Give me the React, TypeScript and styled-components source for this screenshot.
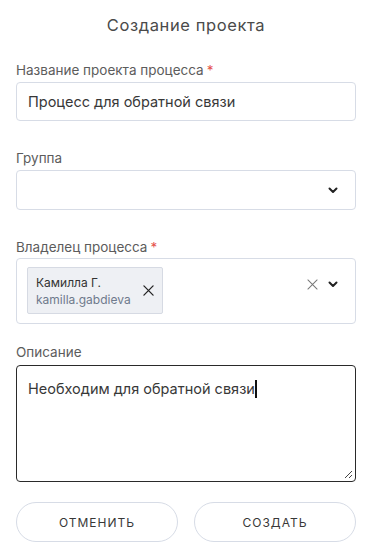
import React from "react";
import styled, { createGlobalStyle } from "styled-components";

const Global = createGlobalStyle`
  html, body { margin: 0; padding: 0; background: #ffffff; }
  body { font-family: Inter, "Noto Sans", Arial, sans-serif; -webkit-font-smoothing: antialiased; }
  * { box-sizing: border-box; }
`;

const Page = styled.div`
  width: 375px;
  padding: 0 19px 0 16px;
  display: flex;
  flex-direction: column;
`;

const Title = styled.h1`
  margin: 0;
  padding-top: 14px;
  height: 48px;
  font-size: 16.5px;
  line-height: 22px;
  font-weight: 400;
  letter-spacing: 0.6px;
  color: #4a4a4a;
  text-align: center;
`;

const Field = styled.div<{ $mt: number }>`
  display: flex;
  flex-direction: column;
  margin-top: ${(p) => p.$mt}px;
`;

const Label = styled.label<{ $gap?: number }>`
  font-size: 13.5px;
  line-height: 20px;
  color: #5c5c5c;
  margin-bottom: ${(p) => p.$gap ?? 2}px;
`;

const Req = styled.span`
  color: #e5534b;
  margin-left: 3px;
`;

const Box = styled.div<{ $h: number }>`
  position: relative;
  height: ${(p) => p.$h}px;
  border: 1px solid #d7dce6;
  border-radius: 4px;
  background: #fff;
  display: flex;
  align-items: center;
  padding: 0 11px;
  font-size: 14.5px;
  color: #383838;
`;

const SelectBox = styled(Box)`
  justify-content: flex-end;
  padding-right: 17px;
`;

const MultiBox = styled(Box)`
  align-items: flex-start;
  justify-content: space-between;
  padding: 8px 17px 0 10px;
`;

const Chip = styled.div`
  width: 136px;
  height: 47px;
  background: #eef0f4;
  border: 1px solid #d6dae3;
  border-radius: 2px;
  display: flex;
  align-items: center;
  justify-content: space-between;
  padding: 0 8px 0 8px;
`;

const ChipText = styled.div`
  display: flex;
  flex-direction: column;
  font-size: 12px;
  line-height: 17px;
`;

const ChipName = styled.span`
  color: #333;
`;

const ChipLogin = styled.span`
  color: #6f7a8c;
`;

const Controls = styled.div`
  display: flex;
  align-items: center;
  gap: 10px;
  margin-top: 12px;
`;

const TextArea = styled.div`
  position: relative;
  height: 117px;
  border: 1px solid #2a2a2a;
  border-radius: 4px;
  padding: 13px 11px;
  font-size: 14.5px;
  line-height: 20px;
  color: #383838;
`;

const Caret = styled.span`
  display: inline-block;
  width: 2px;
  height: 18px;
  background: #111;
  vertical-align: -4px;
`;

const Grip = styled.svg`
  position: absolute;
  right: 2px;
  bottom: 2px;
`;

const Buttons = styled.div`
  display: grid;
  grid-template-columns: 1fr 1fr;
  gap: 16px;
  margin-top: 20px;
`;

const Button = styled.button`
  height: 40px;
  border-radius: 20px;
  border: 1px solid #d7dce6;
  background: #fff;
  font-family: Inter, "Noto Sans", Arial, sans-serif;
  font-size: 12px;
  letter-spacing: 1px;
  color: #383838;
  text-transform: uppercase;
`;

const Chevron = () => (
  <svg width="10" height="7" viewBox="0 0 10 7">
    <path d="M1.5 1.5 L5 5 L8.5 1.5" fill="none" stroke="#222" strokeWidth="2" strokeLinecap="round" strokeLinejoin="round" />
  </svg>
);

const Cross = ({ size, color, w }: { size: number; color: string; w: number }) => (
  <svg width={size} height={size} viewBox="0 0 12 12">
    <path d="M1 1 L11 11 M11 1 L1 11" fill="none" stroke={color} strokeWidth={w} strokeLinecap="round" />
  </svg>
);

export default function App() {
  return (
    <>
      <Global />
      <Page>
        <Title>Создание проекта</Title>
        <Field $mt={12}>
          <Label>
            Название проекта процесса<Req>*</Req>
          </Label>
          <Box $h={39}>Процесс для обратной связи</Box>
        </Field>
        <Field $mt={27}>
          <Label>Группа</Label>
          <SelectBox $h={40}>
            <Chevron />
          </SelectBox>
        </Field>
        <Field $mt={27}>
          <Label $gap={1}>
            Владелец процесса<Req>*</Req>
          </Label>
          <MultiBox $h={66}>
            <Chip>
              <ChipText>
                <ChipName>Камилла Г.</ChipName>
                <ChipLogin>kamilla.gabdieva</ChipLogin>
              </ChipText>
              <Cross size={11} color="#222" w={1.4} />
            </Chip>
            <Controls>
              <Cross size={11} color="#777" w={1.1} />
              <Chevron />
            </Controls>
          </MultiBox>
        </Field>
        <Field $mt={18}>
          <Label $gap={3}>Описание</Label>
          <TextArea>
            Необходим для обратной связи
            <Caret />
            <Grip width="10" height="10" viewBox="0 0 10 10">
              <path d="M9 2 L2 9 M9 6 L6 9" stroke="#444" strokeWidth="1" fill="none" />
            </Grip>
          </TextArea>
        </Field>
        <Buttons>
          <Button>Отменить</Button>
          <Button>Создать</Button>
        </Buttons>
      </Page>
    </>
  );
}
